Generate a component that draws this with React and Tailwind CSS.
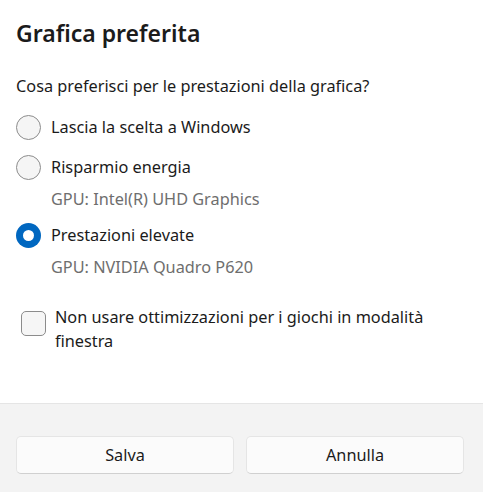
import React from "react";

function Radio({ checked }) {
  if (checked) {
    return (
      <span className="flex h-[25px] w-[25px] shrink-0 items-center justify-center rounded-full bg-[#0067c0]">
        <span className="h-[11px] w-[11px] rounded-full bg-white" />
      </span>
    );
  }
  return (
    <span className="h-[25px] w-[25px] shrink-0 rounded-full border-[1.5px] border-[#8c8c8c] bg-[#f5f5f5]" />
  );
}

export default function App() {
  const font = { fontFamily: '"Noto Sans", "Open Sans", sans-serif' };
  return (
    <div style={font} className="flex h-[492px] w-[483px] flex-col bg-white text-[#1b1b1b]">
      <div className="flex-1 px-4 pt-[17px]">
        <h1 className="pl-[-1px] text-[23px] font-semibold leading-[32px]">Grafica preferita</h1>
        <p className="mt-[25px] text-[16.3px] leading-[24px]">Cosa preferisci per le prestazioni della grafica?</p>
        <div className="mt-[9px] flex flex-col">
          <div className="flex h-[40px] items-center gap-[10px]">
            <Radio />
            <span className="text-[16.3px] leading-[24px]">Lascia la scelta a Windows</span>
          </div>
          <div className="flex h-[40px] items-center gap-[10px]">
            <Radio />
            <span className="text-[16.3px] leading-[24px]">Risparmio energia</span>
          </div>
          <div className="pl-[35px] text-[16.3px] leading-[24px] text-[#6e6e6e]">GPU: Intel(R) UHD Graphics</div>
          <div className="mt-[4px] flex h-[40px] items-center gap-[10px]">
            <Radio checked />
            <span className="text-[16.3px] leading-[24px]">Prestazioni elevate</span>
          </div>
          <div className="pl-[35px] text-[16.3px] leading-[24px] text-[#6e6e6e]">GPU: NVIDIA Quadro P620</div>
        </div>
        <div className="mt-[26px] flex items-start gap-[9px] pl-[5px]">
          <span className="mt-[6px] h-[25px] w-[25px] shrink-0 rounded-[5px] border-[1.5px] border-[#8c8c8c] bg-[#f6f6f6]" />
          <span className="text-[16.3px] leading-[24px]">Non usare ottimizzazioni per i giochi in modalità<br />finestra</span>
        </div>
      </div>
      <div className="flex h-[89px] gap-[12px] border-t border-[#e5e5e5] bg-[#f3f3f3] pl-4 pr-[19px] pt-[32px]">
        <button className="h-[38px] flex-1 rounded-[5px] border border-[#e5e5e5] border-b-[#d0d0d0] bg-[#fbfbfb] text-[16.3px] text-[#1b1b1b]">Salva</button>
        <button className="h-[38px] flex-1 rounded-[5px] border border-[#e5e5e5] border-b-[#d0d0d0] bg-[#fbfbfb] text-[16.3px] text-[#1b1b1b]">Annulla</button>
      </div>
    </div>
  );
}
